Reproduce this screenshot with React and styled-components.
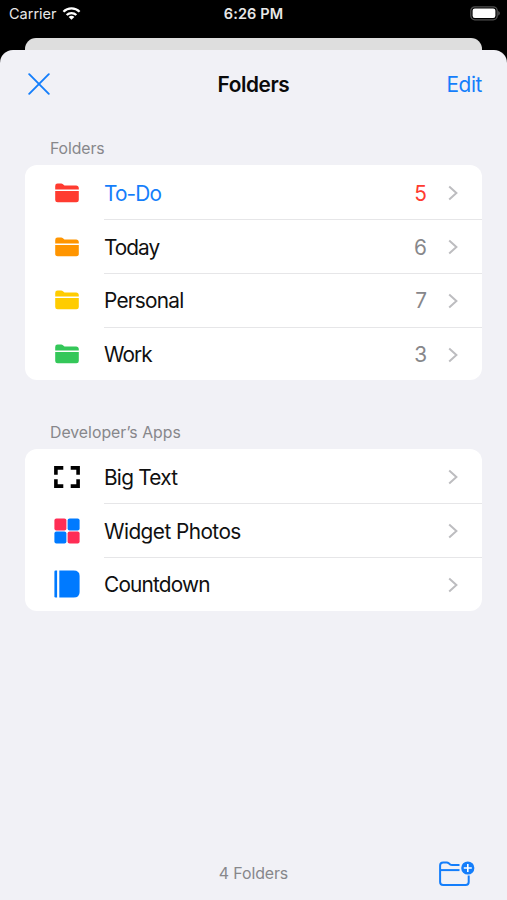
import React from "react";
import styled, { createGlobalStyle } from "styled-components";

const GlobalStyle = createGlobalStyle`
  * {
    box-sizing: border-box;
  }

  body {
    margin: 0;
    background-color: #000;
    font-family: Inter, "Liberation Sans", sans-serif;
  }
`;

const Screen = styled.div`
  display: flex;
  flex-direction: column;
  height: 900px;
  width: 507px;
  overflow: hidden;
  background-color: #000;
`;

// Carrier, clock and battery
const StatusBar = styled.div`
  display: grid;
  grid-template-columns: 1fr auto 1fr;
  align-items: center;
  height: 38px;
  padding: 0 7px 11px 7px;
  color: #e8e8e8;
  font-size: 14.5px;
  line-height: 18px;
`;

const Carrier = styled.div`
  display: flex;
  align-items: center;
  gap: 5px;
  padding-left: 2px;
`;

const Clock = styled.div`
  font-weight: 600;
  letter-spacing: 0.1px;
`;

const BatterySlot = styled.div`
  display: flex;
  justify-content: flex-end;
`;

// Edge of the screen that sits behind the sheet
const BackSheet = styled.div`
  flex: none;
  height: 12px;
  margin: 0 25px;
  border-radius: 11px 11px 0 0;
  background-color: #dedede;
`;

const Sheet = styled.main`
  display: flex;
  flex: 1;
  flex-direction: column;
  border-radius: 13px 13px 0 0;
  background-color: #f1f1f6;
`;

const Header = styled.header`
  display: grid;
  grid-template-columns: 1fr auto 1fr;
  align-items: center;
  height: 69px;
  padding: 0 25px;
`;

const Title = styled.h1`
  margin: 0;
  color: #0a0a0a;
  font-size: 20.8px;
  font-weight: 600;
  letter-spacing: -0.4px;
`;

const IconButton = styled.button`
  display: flex;
  padding: 0;
  border: 0;
  background: none;
`;

const CloseButton = styled(IconButton)`
  padding: 0 0 1px 3px;
`;

const EditButton = styled.button`
  justify-self: end;
  padding: 0;
  border: 0;
  background: none;
  color: #147efb;
  font-family: inherit;
  font-size: 20.8px;
  letter-spacing: -0.4px;
`;

const Section = styled.section`
  padding: 0 25px;
  margin-top: ${(props) => props.$top};
`;

const SectionTitle = styled.h2`
  height: 33px;
  margin: 0;
  padding: 7px 25px 0;
  color: #87878b;
  font-size: 15.8px;
  font-weight: 400;
  line-height: 20px;
  letter-spacing: ${(props) => props.$tracking};
`;

const List = styled.div`
  overflow: hidden;
  border-radius: 12px;
  background-color: #fff;
`;

const Row = styled.div`
  display: flex;
  align-items: center;
  height: 53.75px;
  padding-left: 28px;
`;

const RowIcon = styled.div`
  display: flex;
  flex: none;
  justify-content: center;
  width: 28px;
  margin-right: 23px;
  padding-top: 1px;
`;

const RowBody = styled.div`
  display: flex;
  flex: 1;
  align-items: center;
  height: 100%;
  padding: 1px 24px 0 0;
  border-top: 1px solid #e6e6e8;

  ${Row}:first-child & {
    border-top-color: transparent;
  }
`;

const Label = styled.span`
  flex: 1;
  color: ${(props) => (props.$active ? "#147efb" : "#101010")};
  font-size: 20.8px;
  letter-spacing: ${(props) => props.$tracking};
`;

const Count = styled.span`
  margin-right: 21px;
  color: ${(props) => (props.$active ? "#ff3b30" : "#87878b")};
  font-size: 20.8px;
`;

const Footer = styled.footer`
  display: grid;
  grid-template-columns: 1fr auto 1fr;
  align-items: center;
  height: 54px;
  margin-top: auto;
  padding: 0 32px;
`;

const FooterText = styled.span`
  grid-column: 2;
  color: #87878b;
  font-size: 15.9px;
  letter-spacing: -0.1px;
`;

const FooterButton = styled(IconButton)`
  justify-self: end;
`;

const WifiIcon = () => (
  <svg width="19" height="15" viewBox="0 0 20 15">
    <g fill="none" stroke="#fff" strokeWidth="2.4">
      <path d="M1.5 5.7C6.2 1 13.8 1 18.5 5.7" />
      <path d="M4.9 9.1C7.8 6.3 12.2 6.3 15.1 9.1" />
    </g>
    <path d="M7 11.1C8.7 9.6 11.3 9.6 13 11.1L10 14.2Z" fill="#fff" />
  </svg>
);

const BatteryIcon = () => (
  <svg width="30" height="15" viewBox="0 0 30 15">
    <rect x="0.8" y="0.8" width="26.4" height="13" rx="4" fill="none" stroke="#505050" strokeWidth="1.3" />
    <rect x="2.6" y="2.6" width="22.8" height="9.4" rx="2.2" fill="#fff" />
    <path d="M28.3 5C30.2 5.8 30.2 8.8 28.3 9.6Z" fill="#606060" />
  </svg>
);

const CloseIcon = () => (
  <svg width="22" height="22" viewBox="0 0 22 22">
    <path d="M1.2 1.2L20.8 20.8M20.8 1.2L1.2 20.8" stroke="#147efb" strokeWidth="1.9" strokeLinecap="round" />
  </svg>
);

const FolderIcon = ({ color }) => (
  <svg width="24" height="20" viewBox="0 0 24 20" fill={color}>
    <path d="M0.2 6.6V3Q0.2 0.6 2.6 0.6H6.1Q7.2 0.6 8 1.3L8.8 1.9Q9.4 2.4 10.3 2.4H21.1Q23.6 2.4 23.8 5V6.6Z" />
    <path d="M0.2 8H23.8V16.9Q23.8 19.3 21.4 19.3H2.6Q0.2 19.3 0.2 16.9Z" />
  </svg>
);

const FrameIcon = () => (
  <svg width="26" height="22" viewBox="0 0 26 22">
    <path
      d="M1.9 8.7V1.9H9.3M16.7 1.9H24.1V8.7M24.1 13.3V20.1H16.7M9.3 20.1H1.9V13.3"
      fill="none"
      stroke="#000"
      strokeWidth="3.6"
    />
  </svg>
);

const GridIcon = () => (
  <svg width="26" height="26" viewBox="0 0 26 26">
    <rect x="0.4" y="0.4" width="12" height="12" rx="2" fill="#ff2d55" />
    <rect x="13.6" y="0.4" width="12" height="12" rx="2" fill="#007aff" />
    <rect x="0.4" y="13.6" width="12" height="12" rx="2" fill="#007aff" />
    <rect x="13.6" y="13.6" width="12" height="12" rx="2" fill="#ff2d55" />
  </svg>
);

const BookIcon = () => (
  <svg width="26" height="28" viewBox="0 0 26 28" fill="#007aff">
    <path d="M3.1 0.5V27.5H1.6Q0.4 27.5 0.4 26.3V1.7Q0.4 0.5 1.6 0.5Z" />
    <path d="M5.3 0.5H19.6Q25.6 0.5 25.6 6V22Q25.6 27.5 19.6 27.5H5.3Z" />
  </svg>
);

const Chevron = () => (
  <svg width="10" height="16" viewBox="0 0 10 16">
    <path d="M1.2 1.4L8.4 8L1.2 14.6" fill="none" stroke="#bdbdc0" strokeWidth="2" />
  </svg>
);

const NewFolderIcon = () => (
  <svg width="37" height="27" viewBox="0 0 37 27">
    <g fill="none" stroke="#147efb" strokeWidth="2">
      <path d="M21.5 5.1H14.2Q12.8 5.1 11.8 4.2L10.5 3.1Q9.8 2.6 8.9 2.6H5.2Q2.1 2.6 2.1 5.6V22Q2.1 25 5.2 25H27.6Q30.7 25 30.7 22V15.5" />
      <path d="M2.1 10.1H21.5" />
    </g>
    <circle cx="29.8" cy="8" r="6.6" fill="#147efb" />
    <path d="M25.8 8H33.8M29.8 4V12" stroke="#fff" strokeWidth="1.6" />
  </svg>
);

const folders = [
  { name: "To-Do", count: 5, color: "#ff3b30", tracking: "-0.85px", active: true },
  { name: "Today", count: 6, color: "#ff9500", tracking: "-1px" },
  { name: "Personal", count: 7, color: "#ffcc00", tracking: "-0.75px" },
  { name: "Work", count: 3, color: "#34c759", tracking: "-0.9px" },
];

const apps = [
  { name: "Big Text", icon: <FrameIcon />, tracking: "-0.75px" },
  { name: "Widget Photos", icon: <GridIcon />, tracking: "-0.55px" },
  { name: "Countdown", icon: <BookIcon />, tracking: "-0.8px" },
];

function App() {
  return (
    <Screen>
      <GlobalStyle />
      <StatusBar>
        <Carrier>
          Carrier
          <WifiIcon />
        </Carrier>
        <Clock>6:26 PM</Clock>
        <BatterySlot>
          <BatteryIcon />
        </BatterySlot>
      </StatusBar>
      <BackSheet />
      <Sheet>
        <Header>
          <CloseButton aria-label="Close">
            <CloseIcon />
          </CloseButton>
          <Title>Folders</Title>
          <EditButton>Edit</EditButton>
        </Header>

        <Section $top="13.4px">
          <SectionTitle $tracking="-0.1px">Folders</SectionTitle>
          <List>
            {folders.map((folder) => (
              <Row key={folder.name}>
                <RowIcon>
                  <FolderIcon color={folder.color} />
                </RowIcon>
                <RowBody>
                  <Label $active={folder.active} $tracking={folder.tracking}>
                    {folder.name}
                  </Label>
                  <Count $active={folder.active}>{folder.count}</Count>
                  <Chevron />
                </RowBody>
              </Row>
            ))}
          </List>
        </Section>

        <Section $top="36px">
          <SectionTitle $tracking="0px">Developer’s Apps</SectionTitle>
          <List>
            {apps.map((app) => (
              <Row key={app.name}>
                <RowIcon>{app.icon}</RowIcon>
                <RowBody>
                  <Label $tracking={app.tracking}>{app.name}</Label>
                  <Chevron />
                </RowBody>
              </Row>
            ))}
          </List>
        </Section>

        <Footer>
          <FooterText>4 Folders</FooterText>
          <FooterButton aria-label="New folder">
            <NewFolderIcon />
          </FooterButton>
        </Footer>
      </Sheet>
    </Screen>
  );
}

export default App;
